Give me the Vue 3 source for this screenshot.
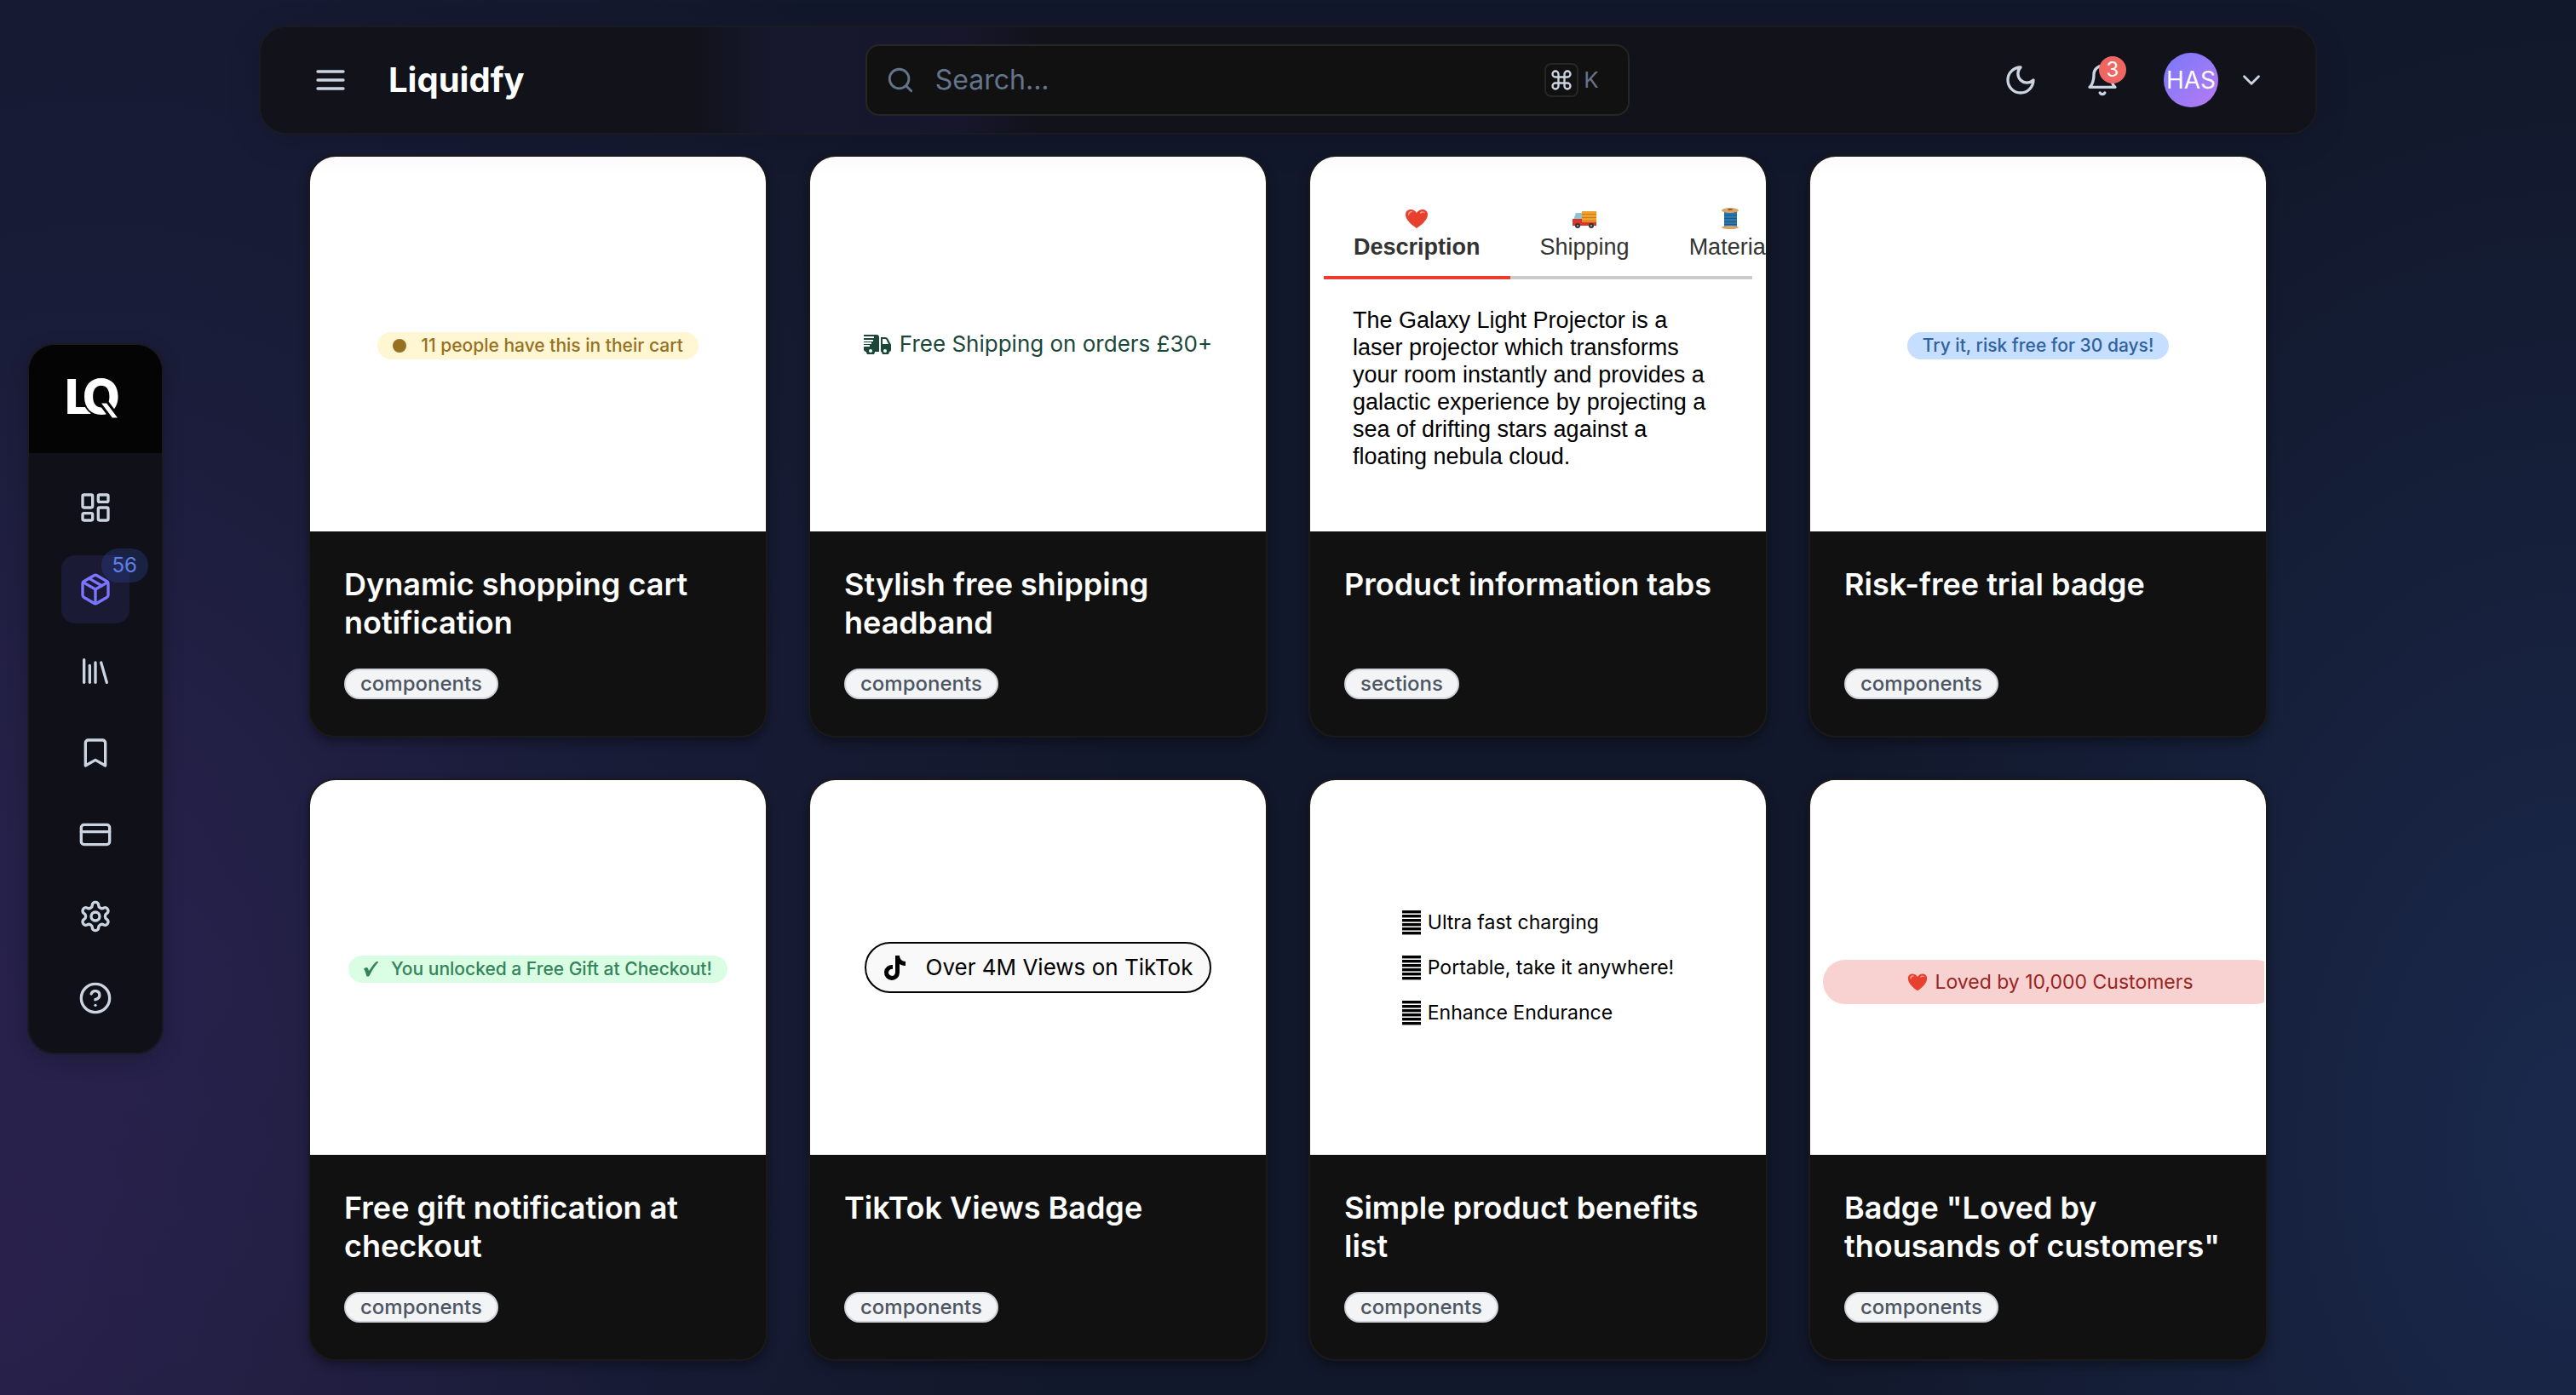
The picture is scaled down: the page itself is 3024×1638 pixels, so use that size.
<script setup>
import { ref } from 'vue'

const nav = [
  {
    label: 'Dashboard',
    paths: [
      'M4 3h5a1 1 0 0 1 1 1v7a1 1 0 0 1-1 1H4a1 1 0 0 1-1-1V4a1 1 0 0 1 1-1z',
      'M15 3h5a1 1 0 0 1 1 1v3a1 1 0 0 1-1 1h-5a1 1 0 0 1-1-1V4a1 1 0 0 1 1-1z',
      'M15 12h5a1 1 0 0 1 1 1v7a1 1 0 0 1-1 1h-5a1 1 0 0 1-1-1v-7a1 1 0 0 1 1-1z',
      'M4 16h5a1 1 0 0 1 1 1v3a1 1 0 0 1-1 1H4a1 1 0 0 1-1-1v-3a1 1 0 0 1 1-1z',
    ],
  },
  {
    label: 'Products',
    active: true,
    count: 56,
    paths: [
      'M21 8a2 2 0 0 0-1-1.73l-7-4a2 2 0 0 0-2 0l-7 4A2 2 0 0 0 3 8v8a2 2 0 0 0 1 1.73l7 4a2 2 0 0 0 2 0l7-4A2 2 0 0 0 21 16z',
      'm3.3 7 8.7 5 8.7-5',
      'M12 22V12',
      'm7.5 4.27 9 5.15',
    ],
  },
  { label: 'Library', paths: ['m16 6 4 14', 'M12 6v14', 'M8 8v12', 'M4 4v16'] },
  { label: 'Saved', paths: ['m19 21-7-4-7 4V5a2 2 0 0 1 2-2h10a2 2 0 0 1 2 2z'] },
  {
    label: 'Billing',
    paths: ['M4 5h16a2 2 0 0 1 2 2v10a2 2 0 0 1-2 2H4a2 2 0 0 1-2-2V7a2 2 0 0 1 2-2z', 'M2 10h20'],
  },
  {
    label: 'Settings',
    paths: [
      'M12.22 2h-.44a2 2 0 0 0-2 2v.18a2 2 0 0 1-1 1.73l-.43.25a2 2 0 0 1-2 0l-.15-.08a2 2 0 0 0-2.73.73l-.22.38a2 2 0 0 0 .73 2.73l.15.1a2 2 0 0 1 1 1.72v.51a2 2 0 0 1-1 1.74l-.15.09a2 2 0 0 0-.73 2.73l.22.38a2 2 0 0 0 2.73.73l.15-.08a2 2 0 0 1 2 0l.43.25a2 2 0 0 1 1 1.73V20a2 2 0 0 0 2 2h.44a2 2 0 0 0 2-2v-.18a2 2 0 0 1 1-1.73l.43-.25a2 2 0 0 1 2 0l.15.08a2 2 0 0 0 2.73-.73l.22-.39a2 2 0 0 0-.73-2.73l-.15-.08a2 2 0 0 1-1-1.74v-.5a2 2 0 0 1 1-1.74l.15-.09a2 2 0 0 0 .73-2.73l-.22-.38a2 2 0 0 0-2.73-.73l-.15.08a2 2 0 0 1-2 0l-.43-.25a2 2 0 0 1-1-1.73V4a2 2 0 0 0-2-2z',
      'M15 12a3 3 0 1 1-6 0 3 3 0 0 1 6 0z',
    ],
  },
  {
    label: 'Help',
    paths: ['M22 12a10 10 0 1 1-20 0 10 10 0 0 1 20 0z', 'M9.09 9a3 3 0 0 1 5.83 1c0 2-3 3-3 3', 'M12 17h.01'],
  },
]

const cards = [
  { kind: 'cart', title: 'Dynamic shopping cart notification', tag: 'components' },
  { kind: 'shipping', title: 'Stylish free shipping headband', tag: 'components' },
  { kind: 'tabs', title: 'Product information tabs', tag: 'sections' },
  { kind: 'trial', title: 'Risk-free trial badge', tag: 'components' },
  { kind: 'gift', title: 'Free gift notification at checkout', tag: 'components' },
  { kind: 'tiktok', title: 'TikTok Views Badge', tag: 'components' },
  { kind: 'benefits', title: 'Simple product benefits list', tag: 'components' },
  { kind: 'loved', title: 'Badge "Loved by thousands of customers"', tag: 'components' },
]

const tabs = ['Description', 'Shipping', 'Material']
const activeTab = ref('Description')
const benefits = ['Ultra fast charging', 'Portable, take it anywhere!', 'Enhance Endurance']
const query = ref('')
</script>

<template>
  <div class="shell">
    <aside class="side">
      <div class="rail">
        <a class="logo" href="#" aria-label="Home">
          <svg width="72" height="76" viewBox="0 0 72 76">
            <text x="0" y="55" class="logo-text">L<tspan dx="-10">Q</tspan></text>
            <path d="M40 41h10l15 20H55z" fill="#fff" stroke="#040404" stroke-width="3" />
          </svg>
        </a>
        <nav class="nav" aria-label="Main">
          <a
            v-for="item in nav"
            :key="item.label"
            href="#"
            class="nav-item"
            :class="{ active: item.active }"
            :aria-label="item.label"
          >
            <svg class="icon" width="40" height="40" viewBox="0 0 24 24">
              <path v-for="d in item.paths" :key="d" :d="d" />
            </svg>
            <span v-if="item.count" class="count">{{ item.count }}</span>
          </a>
        </nav>
      </div>
    </aside>

    <main class="main">
      <header class="bar">
        <div class="brand">
          <button class="plain" aria-label="Menu">
            <svg class="icon" width="40" height="40" viewBox="0 0 24 24"><path d="M3 6h18M3 12h18M3 18h18" /></svg>
          </button>
          <span class="name">Liquidfy</span>
        </div>

        <label class="search">
          <svg class="icon thin" width="34" height="34" viewBox="0 0 24 24">
            <circle cx="11" cy="11" r="8" /><path d="m21 21-4.3-4.3" />
          </svg>
          <input v-model="query" type="text" placeholder="Search..." aria-label="Search" />
          <kbd class="key">
            <svg class="icon" width="28" height="28" viewBox="0 0 24 24">
              <path d="M15 6v12a3 3 0 1 0 3-3H6a3 3 0 1 0 3 3V6a3 3 0 1 0-3 3h12a3 3 0 1 0-3-3" />
            </svg>
          </kbd>
          <kbd class="letter">K</kbd>
        </label>

        <div class="actions">
          <button class="plain action" aria-label="Dark mode">
            <svg class="icon" width="40" height="40" viewBox="0 0 24 24"><path d="M12 3a6 6 0 0 0 9 9 9 9 0 1 1-9-9z" /></svg>
          </button>
          <button class="plain action" aria-label="Notifications">
            <svg class="icon" width="40" height="40" viewBox="0 0 24 24">
              <path d="M6 8a6 6 0 0 1 12 0c0 7 3 9 3 9H3s3-2 3-9" /><path d="M10.3 21a1.94 1.94 0 0 0 3.4 0" />
            </svg>
            <span class="alert">3</span>
          </button>
          <button class="plain user" aria-label="Account">
            <span class="avatar">HAS</span>
            <svg class="icon" width="34" height="34" viewBox="0 0 24 24"><path d="m6 9 6 6 6-6" /></svg>
          </button>
        </div>
      </header>

      <section class="grid">
        <article v-for="card in cards" :key="card.title" class="card">
          <div class="preview" :class="card.kind">
            <span v-if="card.kind === 'cart'" class="pill yellow"><i class="dot"></i>11 people have this in their cart</span>

            <span v-else-if="card.kind === 'shipping'" class="headband">
              <svg width="32" height="24" viewBox="0 0 32 24">
                <path
                  fill="currentColor"
                  d="M3 1h12a3 3 0 0 1 3 3v17h-5a4 4 0 0 1-10 0 3 3 0 0 1-3-2v-4h7v-2H0v-1h9v-2H0V9h11V7H0V5h12V3H0V1zM20 4h5c2 0 3 1 4 3l2 4c1 1 1 2 1 3v5c0 1-1 2-2 2a4 4 0 0 1-9 0h-1z"
                />
                <path fill="#fff" d="M22 6h3c1 0 2 1 2 2l2 4h-7z" />
                <circle cx="8" cy="20" r="2" fill="#fff" /><circle cx="25" cy="20" r="2" fill="#fff" />
              </svg>
              Free Shipping on orders £30+
            </span>

            <template v-else-if="card.kind === 'tabs'">
              <div class="tablist" role="tablist">
                <button
                  v-for="tab in tabs"
                  :key="tab"
                  role="tab"
                  class="tab"
                  :class="{ on: tab === activeTab }"
                  :aria-selected="tab === activeTab"
                  @click="activeTab = tab"
                >
                  <svg v-if="tab === 'Description'" class="emoji" viewBox="0 0 28 28">
                    <path fill="#e8402f" d="M14 25C8 21 1 15 1 9c0-4 3-6 6-6s6 2 7 4c1-2 4-4 7-4s6 2 6 6c0 6-7 12-13 16z" />
                    <path fill="#f9a59a" d="M4 8c0-2 2-3 4-3 1 0 2 1 1 1-2 0-4 2-4 4 0 1-1 0-1-2zM18 7c1-2 3-2 5-1 1 0 1 1 0 1-2-1-3 0-5 1z" />
                  </svg>
                  <svg v-else-if="tab === 'Shipping'" class="emoji" viewBox="0 0 28 28">
                    <path fill="#f0a12c" d="M11 5h17v14H11z" />
                    <path fill="#c97a1d" d="M11 8h17v1H11zM11 12h17v1H11zM11 16h17v1H11z" />
                    <path fill="#8fc3d8" d="M4 7h7v8H1z" />
                    <path fill="#d9362b" d="M0 14h11v4h17v4H0z" />
                    <circle cx="6" cy="22" r="3" fill="#333" /><circle cx="22" cy="22" r="3" fill="#333" />
                    <circle cx="6" cy="22" r="1" fill="#bbb" /><circle cx="22" cy="22" r="1" fill="#bbb" />
                  </svg>
                  <svg v-else class="emoji" viewBox="0 0 28 28">
                    <path fill="#2b76ad" d="M7 5h15v18H7z" />
                    <path fill="#1d5986" d="M7 9h15v1H7zM7 13h15v1H7zM7 17h15v1H7zM7 20h15v1H7z" />
                    <ellipse cx="14" cy="4" rx="10" ry="3" fill="#d9a566" /><ellipse cx="14" cy="3" rx="3" ry="1" fill="#86592d" />
                    <ellipse cx="14" cy="24" rx="10" ry="2" fill="#d9a566" />
                  </svg>
                  {{ tab }}
                </button>
              </div>
              <p class="panel">
                The Galaxy Light Projector is a laser projector which transforms your room instantly and provides a galactic
                experience by projecting a sea of drifting stars against a floating nebula cloud.
              </p>
            </template>

            <span v-else-if="card.kind === 'trial'" class="pill blue">Try it, risk free for 30 days!</span>

            <span v-else-if="card.kind === 'gift'" class="pill green">
              <svg class="tick" width="18" height="18" viewBox="0 0 18 18">
                <path fill="currentColor" d="M0 9c1-2 4-3 5-1l1 3C9 7 12 2 15 0c1-1 2 0 2 1C13 5 10 10 7 16c-1 2-4 2-4 0C2 13 2 11 0 9z" />
              </svg>
              You unlocked a Free Gift at Checkout!
            </span>

            <span v-else-if="card.kind === 'tiktok'" class="outline">
              <svg width="28" height="32" viewBox="0 0 28 32">
                <path fill="#000" d="M14 2h5c0 4 3 7 7 7v5c-3 0-5-1-7-2v10a9 9 0 1 1-8-9v5a4 4 0 1 0 3 4z" />
              </svg>
              Over 4M Views on TikTok
            </span>

            <ul v-else-if="card.kind === 'benefits'" class="benefits">
              <li v-for="b in benefits" :key="b"><i class="bars"></i>{{ b }}</li>
            </ul>

            <span v-else class="banner">
              <svg width="24" height="24" viewBox="0 0 28 28">
                <path fill="#e8402f" d="M14 26C8 22 1 16 1 9c0-4 3-6 6-6s6 2 7 4c1-2 4-4 7-4s6 2 6 6c0 7-7 13-13 17z" />
                <path fill="#f9a59a" d="M4 8c0-2 2-3 4-3 1 0 2 1 1 1-2 0-4 2-4 4 0 1-1 0-1-2zM18 7c1-2 3-2 5-1 1 0 1 1 0 1-2-1-3 0-5 1z" />
              </svg>
              Loved by 10,000 Customers
            </span>
          </div>
          <div class="body">
            <h2 class="title">{{ card.title }}</h2>
            <span class="tag">{{ card.tag }}</span>
          </div>
        </article>
      </section>
    </main>
  </div>
</template>

<style>
body {
  margin: 0;
  background: #111729;
}
</style>

<style scoped>
* {
  box-sizing: border-box;
}
.shell {
  display: flex;
  min-height: 100vh;
  padding: 0 192px 0 32px;
  font-family: Inter, "Liberation Sans", sans-serif;
  color: #fff;
  background:
    radial-gradient(ellipse 26% 70% at 0% 92%, rgba(72, 42, 110, 0.3), transparent),
    radial-gradient(ellipse 40% 90% at 4% 65%, rgba(58, 46, 116, 0.34), transparent),
    radial-gradient(ellipse 30% 80% at 100% 82%, rgba(40, 70, 135, 0.36), transparent),
    #12182b;
}
.icon {
  display: block;
  flex: none;
  fill: none;
  stroke: #cbd5e1;
  stroke-width: 2;
  stroke-linecap: round;
  stroke-linejoin: round;
}
.plain {
  padding: 0;
  border: 0;
  background: none;
  color: inherit;
  font: inherit;
}

/* Sidebar */
.side {
  position: sticky;
  top: 0;
  display: flex;
  flex: none;
  align-items: center;
  width: 160px;
  height: 100vh;
  padding-top: 3px;
}
.rail {
  width: 100%;
  overflow: hidden;
  border: 2px solid #191a22;
  border-radius: 32px;
  background: #101018;
  box-shadow: 0 8px 24px rgba(0, 0, 0, 0.2);
}
.logo {
  display: flex;
  align-items: center;
  justify-content: center;
  height: 127px;
  background: #040404;
}
.logo-text {
  font-family: Inter, sans-serif;
  font-weight: 800;
  font-size: 57px;
  fill: #fff;
  stroke: #040404;
  stroke-width: 4px;
  paint-order: stroke;
}
.nav {
  display: flex;
  flex-direction: column;
  align-items: center;
  gap: 16px;
  padding: 24px 0;
}
.nav-item {
  position: relative;
  display: flex;
  align-items: center;
  justify-content: center;
  width: 80px;
  height: 80px;
  border-radius: 16px;
}
.nav-item.active {
  background: #1b1a35;
}
.nav-item.active .icon {
  stroke: #7c75ff;
}
.count {
  position: absolute;
  top: -8px;
  right: -22px;
  padding: 0 13px;
  border-radius: 20px;
  background: rgba(45, 70, 150, 0.35);
  color: #5f7fe6;
  font-size: 24px;
  line-height: 40px;
}

/* Top bar */
.main {
  flex: 1;
  min-width: 0;
  padding: 30px 112px 36px;
}
.bar {
  position: relative;
  z-index: 1;
  display: grid;
  grid-template-columns: 13fr 18fr 15fr;
  align-items: center;
  height: 128px;
  padding: 0 58px 0 62px;
  border: 2px solid #1a1b20;
  border-radius: 32px;
  background:
    linear-gradient(90deg, transparent 21%, rgba(40, 42, 100, 0.26) 25%, rgba(40, 36, 96, 0.26) 34%, transparent 38%),
    #11121a;
  box-shadow: 0 8px 40px rgba(0, 0, 0, 0.12);
}
.brand {
  display: flex;
  align-items: center;
  gap: 48px;
}
.name {
  font-size: 40px;
  font-weight: 700;
  line-height: 48px;
}
.search {
  display: flex;
  align-items: center;
  height: 84px;
  padding: 0 34px 0 22px;
  border: 2px solid #262626;
  border-radius: 16px;
  background: #111;
}
.search .thin {
  stroke: #64748b;
}
.search input {
  flex: 1;
  min-width: 0;
  margin-left: 24px;
  padding: 0;
  border: 0;
  outline: 0;
  background: none;
  color: #cbd5e1;
  font: 32px/40px Inter, sans-serif;
}
.search input::placeholder {
  color: #64748b;
  opacity: 1;
}
.key {
  display: flex;
  align-items: center;
  justify-content: center;
  width: 40px;
  height: 40px;
  border: 2px solid #262626;
  border-radius: 8px;
}
.letter {
  margin-left: 6px;
  color: #64748b;
  font: 26px/40px Inter, sans-serif;
}
.actions {
  display: flex;
  align-items: center;
  justify-content: flex-end;
  gap: 16px;
}
.action {
  position: relative;
  display: flex;
  align-items: center;
  justify-content: center;
  width: 80px;
  height: 80px;
}
.alert {
  position: absolute;
  top: 12px;
  right: 12px;
  width: 32px;
  height: 32px;
  border-radius: 50%;
  background: #ef6762;
  color: #fff;
  font-size: 24px;
  line-height: 32px;
  text-align: center;
}
.user {
  display: flex;
  align-items: center;
  gap: 22px;
  margin-left: 16px;
}
.avatar {
  width: 64px;
  height: 64px;
  border-radius: 50%;
  background: linear-gradient(135deg, #7879fb, #b87af2);
  font-size: 28px;
  line-height: 64px;
  text-align: center;
}

/* Cards */
.grid {
  display: grid;
  grid-template-columns: repeat(4, minmax(0, 1fr));
  gap: 48px;
  margin: 24px 58px 0;
}
.card {
  overflow: hidden;
  border: 2px solid #1a1a1a;
  border-radius: 32px;
  background: #111;
  box-shadow: 0 6px 12px rgba(0, 0, 0, 0.35);
}
.preview {
  display: flex;
  align-items: center;
  justify-content: center;
  height: 440px;
  overflow: hidden;
  background: #fff;
  color: #000;
}
.body {
  padding: 40px 40px 43px;
}
.title {
  min-height: 90px;
  margin: 0 0 31px;
  font-size: 36px;
  font-weight: 600;
  line-height: 45px;
}
.tag {
  display: block;
  width: fit-content;
  padding: 0 17px;
  border: 2px solid #d1d5db;
  border-radius: 18px;
  background: #f3f4f6;
  color: #4b5563;
  font-size: 24px;
  font-weight: 500;
  line-height: 32px;
}

/* Previews */
.pill {
  display: flex;
  align-items: center;
  margin-top: 3px;
  padding: 0 18px;
  border-radius: 16px;
  font-size: 21px;
  font-weight: 500;
  line-height: 32px;
  white-space: nowrap;
}
.yellow {
  background: #fff6d3;
  color: #967122;
}
.dot {
  width: 16px;
  height: 16px;
  margin-right: 17px;
  border-radius: 50%;
  background: currentColor;
}
.blue {
  background: #c6deff;
  color: #2f629d;
}
.green {
  background: #dafee3;
  color: #34835a;
}
.tick {
  margin-right: 14px;
}
.headband {
  display: flex;
  align-items: center;
  gap: 10px;
  color: #1b4739;
  font-size: 26px;
  line-height: 34px;
  white-space: nowrap;
}
.preview.tabs {
  flex-direction: column;
  align-items: stretch;
  justify-content: flex-start;
  padding: 44px 16px 0;
  font-family: "Liberation Sans", Arial, sans-serif;
}
.tablist {
  display: flex;
  border-bottom: 4px solid #ccc;
}
.tab {
  flex: none;
  margin-bottom: -4px;
  padding: 15px 35px 18px;
  border: 0;
  border-bottom: 4px solid transparent;
  background: none;
  color: #333;
  font: 27px/32px "Liberation Sans", Arial, sans-serif;
}
.tab.on {
  border-color: #ed3b2f;
  font-weight: 700;
}
.emoji {
  display: block;
  width: 28px;
  height: 28px;
  margin: 0 auto 3px;
}
.panel {
  margin: 0;
  padding: 32px 34px 0;
  font-size: 27px;
  line-height: 32px;
}
.outline {
  display: flex;
  align-items: center;
  gap: 22px;
  padding: 0 20px;
  border: 2px solid #000;
  border-radius: 30px;
  background: #f9f9f9;
  font-size: 26px;
  line-height: 56px;
  white-space: nowrap;
}
.benefits {
  display: flex;
  flex-direction: column;
  gap: 20px;
  margin: 0;
  padding: 0;
  list-style: none;
  font-size: 23px;
  line-height: 33px;
}
.benefits li {
  display: flex;
  align-items: center;
  gap: 8px;
}
.bars {
  width: 22px;
  height: 29px;
  background: repeating-linear-gradient(#000 0 3px, #999 3px 4px, #fff 4px 5px);
}
.preview.loved {
  justify-content: flex-start;
  margin-right: 2px;
  padding: 34px 0 0 15px;
  box-shadow: 2px 0 #fff;
}
.banner {
  display: flex;
  flex: none;
  align-items: center;
  justify-content: center;
  gap: 8px;
  width: 100%;
  min-width: 534px;
  border-radius: 26px;
  background: #f8d2d1;
  color: #9b2321;
  font-size: 23px;
  line-height: 52px;
}
</style>
